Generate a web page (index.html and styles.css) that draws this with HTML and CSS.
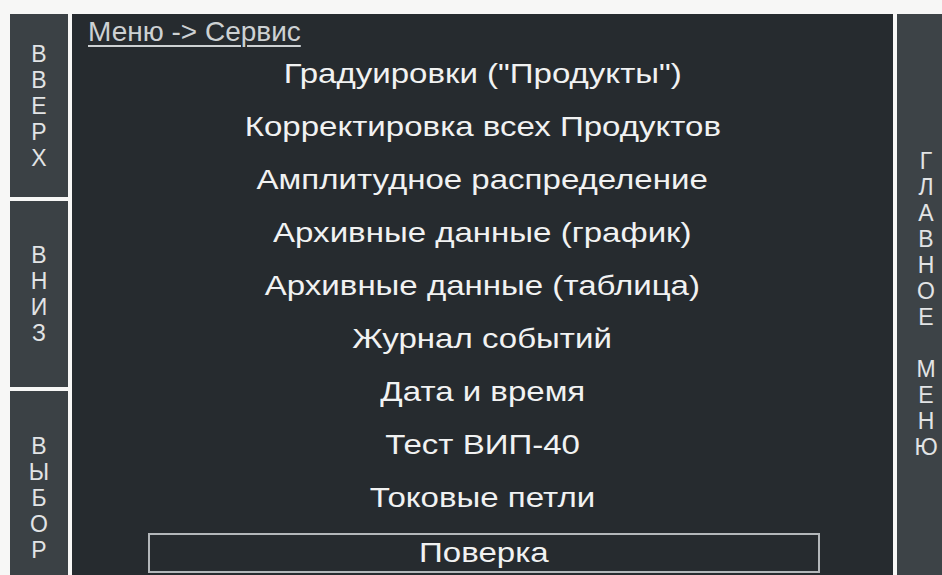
FILE: index.html
```html
<!DOCTYPE html>
<html lang="ru">
<head>
<meta charset="utf-8">
<title>Меню -> Сервис</title>
<link rel="stylesheet" href="styles.css">
</head>
<body>
<div class="screen">
  <div class="side side-left">
    <div class="key key-up">
      <span>В</span><span>В</span><span>Е</span><span>Р</span><span>Х</span>
    </div>
    <div class="key key-down">
      <span>В</span><span>Н</span><span>И</span><span>З</span>
    </div>
    <div class="key key-select">
      <span>В</span><span>Ы</span><span>Б</span><span>О</span><span>Р</span>
    </div>
  </div>

  <div class="menu">
    <div class="crumbs">Меню -&gt; Сервис</div>
    <ul class="items">
      <li class="item"><span class="label">Градуировки ("Продукты")</span></li>
      <li class="item"><span class="label">Корректировка всех Продуктов</span></li>
      <li class="item"><span class="label">Амплитудное распределение</span></li>
      <li class="item"><span class="label">Архивные данные (график)</span></li>
      <li class="item"><span class="label">Архивные данные (таблица)</span></li>
      <li class="item"><span class="label">Журнал событий</span></li>
      <li class="item"><span class="label">Дата и время</span></li>
      <li class="item"><span class="label">Тест ВИП-40</span></li>
      <li class="item"><span class="label">Токовые петли</span></li>
      <li class="item item-selected"><span class="label">Поверка</span></li>
    </ul>
  </div>

  <div class="side side-right">
    <div class="key key-main">
      <span>Г</span><span>Л</span><span>А</span><span>В</span><span>Н</span><span>О</span><span>Е</span><span class="blank">&nbsp;</span><span>М</span><span>Е</span><span>Н</span><span>Ю</span>
    </div>
  </div>
</div>
</body>
</html>
```

FILE: styles.css
```css
html, body {
  margin: 0;
  padding: 0;
}

body {
  width: 942px;
  height: 575px;
  overflow: hidden;
  background: #f7f7f6;
  font-family: "Liberation Sans", Arial, sans-serif;
}

/* whole panel: white seams between blocks come from the page background */
.screen {
  display: flex;
  gap: 4px;
  padding: 14px 0 0 10px;
  height: 600px;
}

.side {
  flex: 0 0 58px;
  display: flex;
  flex-direction: column;
  gap: 4px;
}

.key {
  display: flex;
  flex-direction: column;
  align-items: center;
  justify-content: center;
  background: #3b4145;
  color: #e2e4e5;
  font-size: 23px;
  line-height: 26px;
}

.key span {
  display: block;
}

.key-up {
  height: 183px;
}

.key-down {
  height: 186px;
}

.key-select {
  flex: 1;
  padding-bottom: 10px;
}

.key-main {
  flex: 1;
  padding-bottom: 20px;
  background: #3d4347;
}

.menu {
  flex: 0 0 821px;
  background: #262b2f;
  color: #f1f2f2;
  padding-top: 3px;
}

.crumbs {
  padding-left: 16px;
  font-size: 28px;
  line-height: 30px;
  color: #cdd1d3;
  text-decoration: underline;
  text-decoration-thickness: 2px;
  text-underline-offset: 4px;
}

.items {
  list-style: none;
  margin: 0;
  padding: 0;
}

.item {
  height: 53px;
  font-size: 28px;
  line-height: 53px;
  text-align: center;
}

/* the panel font is drawn wider than it is tall */
.label {
  display: inline-block;
  transform: scaleX(1.18);
}

.item-selected {
  height: 36px;
  line-height: 36px;
  margin: 9px 73px 0 76px;
  border: 2px solid #b3b7ba;
}
```
